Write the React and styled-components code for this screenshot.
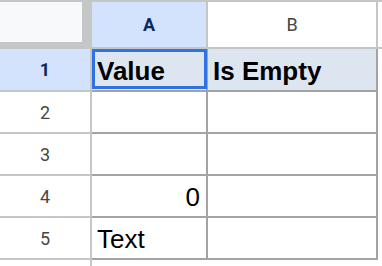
import React from 'react'
import styled, { createGlobalStyle, css } from 'styled-components'

const GlobalStyle = createGlobalStyle`
  html, body {
    margin: 0;
    padding: 0;
    background: #ffffff;
    overflow: hidden;
  }
  * {
    box-sizing: border-box;
  }
`

const headerLine = '#c4c7c5'
const cellLine = '#a3a3a3'

const Sheet = styled.div`
  display: grid;
  grid-template-columns: 92px 116px 170px 1fr;
  grid-template-rows: 47px 43px repeat(4, 42px) 6px;
  width: 382px;
  border-top: 2px solid ${headerLine};
`

const Corner = styled.div`
  background: ${headerLine};
  padding-right: 10px;
  padding-bottom: 7px;
  display: flex;
`

const CornerFace = styled.div`
  flex: 1;
  background: #f8f9fa;
`

const ColHeader = styled.div`
  display: flex;
  align-items: center;
  justify-content: center;
  font-family: Roboto, 'Liberation Sans', sans-serif;
  font-size: 18px;
  color: #444746;
  background: #ffffff;
  border-bottom: 2px solid ${headerLine};
  border-right: ${p => (p.$edge ? 'none' : `2px solid ${headerLine}`)};

  ${p =>
    p.$selected &&
    css`
      background: #d3e3fd;
      color: #0b2a5c;
      font-weight: 700;
    `}
`

const RowHeader = styled.div`
  display: flex;
  align-items: center;
  justify-content: center;
  font-family: Roboto, 'Liberation Sans', sans-serif;
  font-size: 18px;
  color: #444746;
  background: #ffffff;
  border-right: 2px solid ${headerLine};
  border-bottom: ${p => (p.$tail ? 'none' : `2px solid ${headerLine}`)};

  ${p =>
    p.$selected &&
    css`
      background: #d3e3fd;
      color: #0b2a5c;
      font-weight: 700;
    `}
`

const Cell = styled.div`
  position: relative;
  display: flex;
  align-items: flex-end;
  justify-content: ${p => (p.$align === 'right' ? 'flex-end' : 'flex-start')};
  padding: 0 6px 4px 5px;
  font-family: 'Liberation Sans', Arial, sans-serif;
  font-size: 26px;
  line-height: 30px;
  color: #000000;
  font-weight: ${p => (p.$bold ? 700 : 400)};
  background: ${p => (p.$filled ? '#dde6f0' : '#ffffff')};
  border-right: ${p => (p.$open ? 'none' : `2px solid ${cellLine}`)};
  border-bottom: ${p => (p.$open ? 'none' : `2px solid ${cellLine}`)};

  ${p =>
    p.$active &&
    css`
      &::after {
        content: '';
        position: absolute;
        top: 0;
        left: 0;
        right: -1px;
        bottom: 1px;
        border: 3px solid #2f72e4;
        pointer-events: none;
      }
    `}
`

const columns = ['A', 'B']

const rows = [
  { n: 1, a: 'Value', b: 'Is Empty', bold: true, filled: true },
  { n: 2, a: '', b: '' },
  { n: 3, a: '', b: '' },
  { n: 4, a: '0', b: '', alignA: 'right' },
  { n: 5, a: 'Text', b: '' },
]

export default function App() {
  return (
    <>
      <GlobalStyle />
      <Sheet>
        <Corner>
          <CornerFace />
        </Corner>
        {columns.map(c => (
          <ColHeader key={c} $selected={c === 'A'}>
            {c}
          </ColHeader>
        ))}
        <ColHeader $edge />

        {rows.map(r => (
          <React.Fragment key={r.n}>
            <RowHeader $selected={r.n === 1}>{r.n}</RowHeader>
            <Cell $bold={r.bold} $filled={r.filled} $align={r.alignA} $active={r.n === 1}>
              {r.a}
            </Cell>
            <Cell $bold={r.bold} $filled={r.filled}>
              {r.b}
            </Cell>
            <Cell $open />
          </React.Fragment>
        ))}

        <RowHeader $tail />
      </Sheet>
    </>
  )
}
